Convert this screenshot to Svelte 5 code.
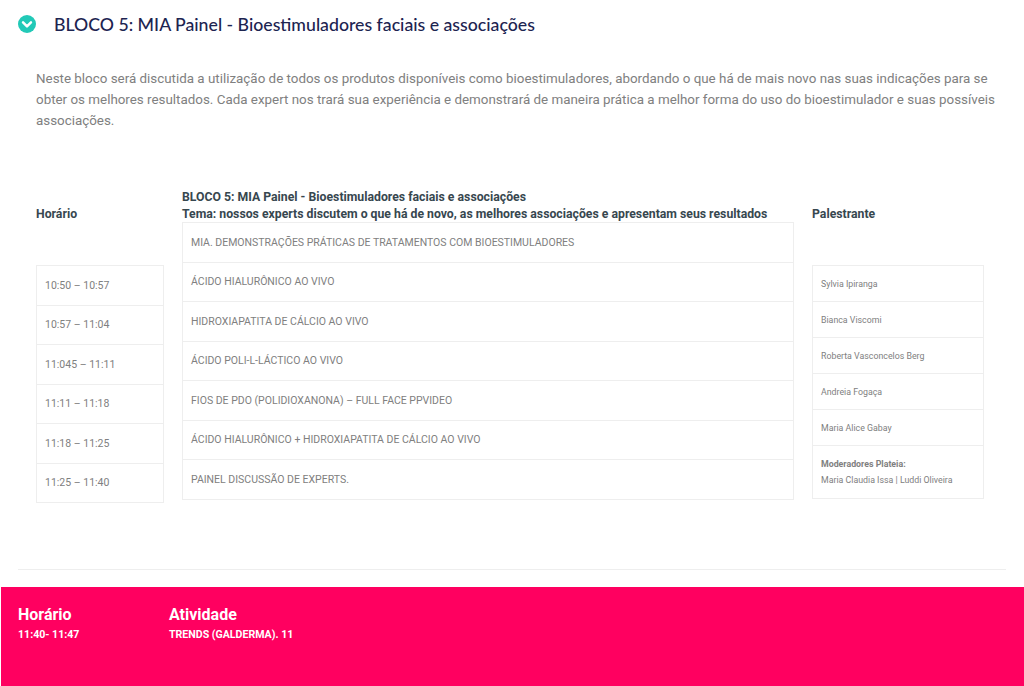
<script>
	const times = ['10:50 – 10:57', '10:57 – 11:04', '11:045 – 11:11', '11:11 – 11:18', '11:18 – 11:25', '11:25 – 11:40'];
	const activities = [
		'MIA. DEMONSTRAÇÕES PRÁTICAS DE TRATAMENTOS COM BIOESTIMULADORES',
		'ÁCIDO HIALURÔNICO AO VIVO',
		'HIDROXIAPATITA DE CÁLCIO AO VIVO',
		'ÁCIDO POLI-L-LÁCTICO AO VIVO',
		'FIOS DE PDO (POLIDIOXANONA) – FULL FACE PPVIDEO',
		'ÁCIDO HIALURÔNICO + HIDROXIAPATITA DE CÁLCIO AO VIVO',
		'PAINEL DISCUSSÃO DE EXPERTS.'
	];
	const speakers = ['Sylvia Ipiranga', 'Bianca Viscomi', 'Roberta Vasconcelos Berg', 'Andreia Fogaça', 'Maria Alice Gabay'];
</script>

<main>
	<header class="title">
		<span class="check">
			<svg viewBox="0 0 20 20" width="18" height="18">
				<circle cx="10" cy="10" r="10" fill="#22c9b7" />
				<path d="M5.6 8.2 10 12.6l4.4-4.4" fill="none" stroke="#fff" stroke-width="2.8" stroke-linecap="round" stroke-linejoin="round" />
			</svg>
		</span>
		<h1>BLOCO 5: MIA Painel - Bioestimuladores faciais e associações</h1>
	</header>

	<p class="intro">
		Neste bloco será discutida a utilização de todos os produtos disponíveis como bioestimuladores, abordando o que há de mais novo nas suas indicações para se obter os melhores resultados. Cada expert nos trará sua experiência e demonstrará de maneira prática a melhor forma do uso do bioestimulador e suas possíveis associações.
	</p>

	<section class="program">
		<div class="col">
			<h3 class="head side">Horário</h3>
			<ul class="list offset">
				{#each times as time}
					<li class="time">{time}</li>
				{/each}
			</ul>
		</div>
		<div class="col">
			<h3 class="head">
				BLOCO 5: MIA Painel - Bioestimuladores faciais e associações<br />
				Tema: nossos experts discutem o que há de novo, as melhores associações e apresentam seus resultados
			</h3>
			<ul class="list">
				{#each activities as activity}
					<li class="activity">{activity}</li>
				{/each}
			</ul>
		</div>
		<div class="col">
			<h3 class="head side">Palestrante</h3>
			<ul class="list offset">
				{#each speakers as speaker}
					<li class="speaker">{speaker}</li>
				{/each}
				<li class="speaker mods">
					<strong>Moderadores Plateia:</strong>
					<span>Maria Claudia Issa | Luddi Oliveira</span>
				</li>
			</ul>
		</div>
	</section>

	<hr />

	<section class="next">
		<div class="next-time">
			<h2>Horário</h2>
			<p>11:40- 11:47</p>
		</div>
		<div>
			<h2>Atividade</h2>
			<p>TRENDS (GALDERMA). 11</p>
		</div>
	</section>
</main>

<style>
	:global(body) {
		background: #fff;
		font-family: Roboto, 'Liberation Sans', sans-serif;
	}

	main {
		height: 686px;
		overflow: hidden;
	}

	.title {
		display: flex;
		align-items: center;
		gap: 18px;
		padding: 15px 18px 0;
		height: 18px;
	}

	.check {
		display: flex;
	}

	h1 {
		margin: 0;
		font-family: Lato, 'Noto Sans', sans-serif;
		font-size: 17.7px;
		font-weight: 500;
		color: #1d2451;
		white-space: nowrap;
	}

	.intro {
		margin: 35px 24px 0 36px;
		font-size: 13.38px;
		line-height: 21px;
		color: #808080;
	}

	.program {
		display: grid;
		grid-template-columns: 128px 612px 172px;
		gap: 18px;
		margin: 58px 0 0 36px;
		width: 948px;
	}

	.head {
		height: 33px;
		margin: 0;
		font-size: 12.25px;
		line-height: 17px;
		font-weight: 700;
		color: #37474f;
		white-space: nowrap;
		box-sizing: border-box;
	}

	.head.side {
		padding-top: 17px;
	}

	.list {
		list-style: none;
		margin: 0;
		padding: 0;
		border: 1px solid #eee;
		border-bottom: 0;
		font-size: 10.5px;
		color: #808080;
	}

	.list.offset {
		margin-top: 43px;
	}

	.list li {
		display: flex;
		align-items: center;
		border-bottom: 1px solid #eee;
		box-sizing: border-box;
		padding-left: 8px;
	}

	.time {
		height: 39.5px;
	}

	.activity {
		height: 39.5px;
	}

	.speaker {
		height: 36px;
		font-size: 8.8px;
	}

	.mods {
		flex-direction: column;
		align-items: flex-start !important;
		justify-content: center;
		height: 53px;
		gap: 6px;
	}

	.mods strong {
		font-weight: 700;
	}

	hr {
		margin: 66px 18px 0;
		border: 0;
		border-top: 1px solid #eee;
	}

	.next {
		display: flex;
		margin: 17px 0 0 1px;
		padding: 18px 17px;
		height: 99px;
		box-sizing: border-box;
		background: #ff0060;
		color: #fff;
	}

	.next-time {
		width: 151px;
	}

	.next h2 {
		margin: 0;
		font-size: 16px;
		line-height: 20px;
		font-weight: 700;
	}

	.next p {
		margin: 3px 0 0;
		font-size: 10.6px;
		line-height: 14px;
		font-weight: 700;
	}
</style>
